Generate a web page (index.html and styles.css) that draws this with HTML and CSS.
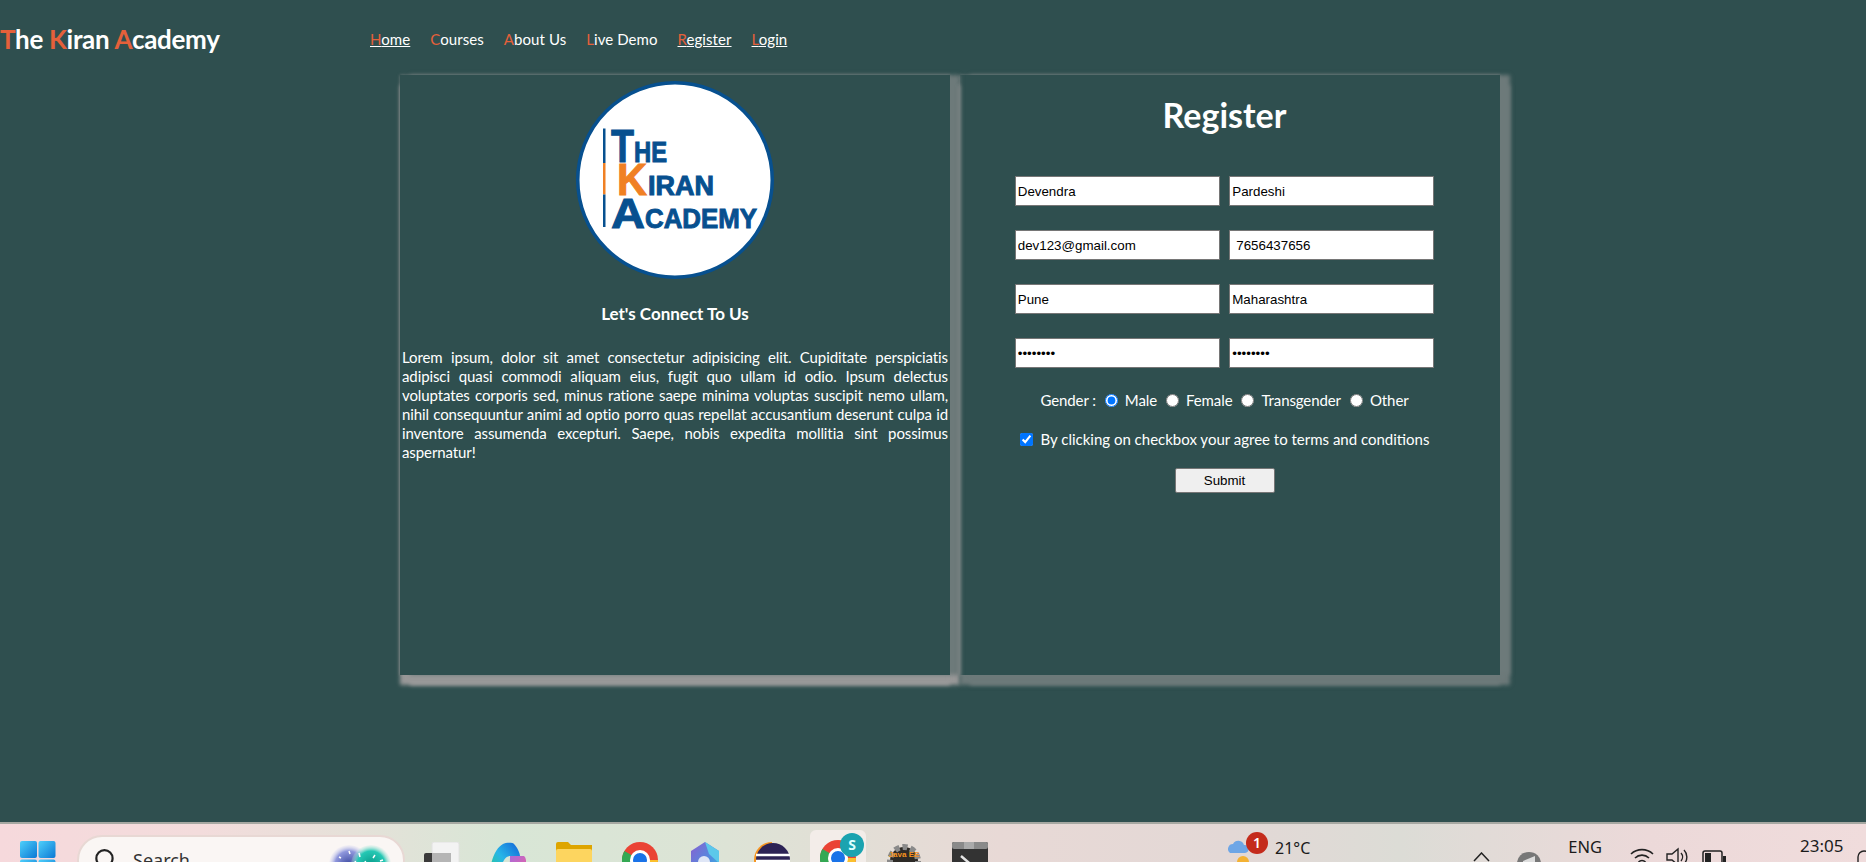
FILE: index.html
```html
<!DOCTYPE html>
<html lang="en">
<head>
<meta charset="utf-8">
<title>The Kiran Academy - Register</title>
<link rel="stylesheet" href="styles.css">
</head>
<body>
<header class="topbar">
  <div class="brand"><b>T</b>he <b>K</b>iran <b>A</b>cademy</div>
  <nav class="nav">
    <a class="link on" href="#"><b>H</b>ome</a>
    <a class="link" href="#"><b>C</b>ourses</a>
    <a class="link" href="#"><b>A</b>bout Us</a>
    <a class="link" href="#"><b>L</b>ive Demo</a>
    <a class="link on" href="#"><b>R</b>egister</a>
    <a class="link on" href="#"><b>L</b>ogin</a>
  </nav>
</header>
<main class="page">
  <section class="panel panel-left">
    <svg class="logo" viewBox="0 0 198 198" width="198" height="198" role="img" aria-label="The Kiran Academy logo">
      <circle cx="99" cy="99" r="97.25" fill="#fff" stroke="#07508f" stroke-width="3.500"/>
      <rect x="27" y="47.500" width="2.500" height="34.500" fill="#07508f"/>
      <rect x="27" y="82" width="2.500" height="31.500" fill="#f08024"/>
      <rect x="27" y="113.500" width="2.500" height="32.500" fill="#07508f"/>
      <text class="logo-text">
        <tspan x="35" y="80.500" font-size="46" textLength="23" lengthAdjust="spacingAndGlyphs">T</tspan>
        <tspan x="58" y="80.500" font-size="29" textLength="33" lengthAdjust="spacingAndGlyphs">HE</tspan>
        <tspan class="logo-k" x="41" y="113.500" font-size="44" textLength="30" lengthAdjust="spacingAndGlyphs">K</tspan>
        <tspan x="72" y="113.500" font-size="27" textLength="66" lengthAdjust="spacingAndGlyphs">IRAN</tspan>
        <tspan x="35" y="147" font-size="43" textLength="34" lengthAdjust="spacingAndGlyphs">A</tspan>
        <tspan x="69" y="147" font-size="28" textLength="112" lengthAdjust="spacingAndGlyphs">CADEMY</tspan>
      </text>
    </svg>
    <h4 class="connect">Let's Connect To Us</h4>
    <p class="lorem">Lorem ipsum, dolor sit amet consectetur adipisicing elit. Cupiditate perspiciatis adipisci quasi commodi aliquam eius, fugit quo ullam id odio. Ipsum delectus voluptates corporis sed, minus ratione saepe minima voluptas suscipit nemo ullam, nihil consequuntur animi ad optio porro quas repellat accusantium deserunt culpa id inventore assumenda excepturi. Saepe, nobis expedita mollitia sint possimus aspernatur!</p>
  </section>
  <section class="panel panel-right">
    <h2 class="title">Register</h2>
    <form class="form">
      <div class="fields">
        <input class="field" type="text" value="Devendra">
        <input class="field" type="text" value="Pardeshi">
        <input class="field" type="email" value="dev123@gmail.com">
        <input class="field field-phone" type="text" value="7656437656">
        <input class="field" type="text" value="Pune">
        <input class="field" type="text" value="Maharashtra">
        <input class="field" type="password" value="password">
        <input class="field" type="password" value="password">
      </div>
      <div class="gender">
        <span class="gender-label">Gender :</span>
        <label class="opt"><input type="radio" name="g" checked>Male</label>
        <label class="opt"><input type="radio" name="g">Female</label>
        <label class="opt"><input type="radio" name="g">Transgender</label>
        <label class="opt"><input type="radio" name="g">Other</label>
      </div>
      <label class="agree"><input type="checkbox" checked>By clicking on checkbox your agree to terms and conditions</label>
      <button class="submit" type="button">Submit</button>
    </form>
  </section>
</main>
<footer class="taskbar">
  <svg class="start" viewBox="0 0 36 36" width="36" height="36" aria-hidden="true">
    <defs>
      <linearGradient id="win" x1="0" y1="0" x2="1" y2="1"><stop offset="0" stop-color="#4fd0fb"/><stop offset="1" stop-color="#0a78d4"/></linearGradient>
    </defs>
    <rect x="0" y="0" width="17" height="17" rx="2" fill="url(#win)"/>
    <rect x="18.500" y="0" width="17" height="17" rx="2" fill="url(#win)"/>
    <rect x="0" y="18.500" width="17" height="17" rx="2" fill="url(#win)"/>
    <rect x="18.500" y="18.500" width="17" height="17" rx="2" fill="url(#win)"/>
  </svg>
  <div class="search">
    <svg class="search-icon" viewBox="0 0 20 24" width="22" height="26" aria-hidden="true"><circle cx="9.500" cy="9.500" r="7.500" fill="none" stroke="#222" stroke-width="2"/><path d="M15 15l5 6" stroke="#222" stroke-width="2"/></svg>
    <span class="search-text">Search</span>
    <svg class="search-art" viewBox="0 0 62 40" width="62" height="40" aria-hidden="true">
      <defs>
        <radialGradient id="gl1"><stop offset="0" stop-color="#39479f"/><stop offset=".7" stop-color="#8f97dc"/><stop offset="1" stop-color="#d8d9f2" stop-opacity=".2"/></radialGradient>
        <radialGradient id="gl2"><stop offset="0" stop-color="#0a9a8a"/><stop offset=".7" stop-color="#25c8b4"/><stop offset="1" stop-color="#bfe9df" stop-opacity=".2"/></radialGradient>
      </defs>
      <circle cx="20" cy="20" r="20" fill="url(#gl1)"/>
      <circle cx="42" cy="20" r="20" fill="url(#gl2)"/>
      <ellipse cx="32" cy="30" rx="16" ry="12" fill="#8a8a4a" opacity=".7"/>
      <path d="M10 12l2 1M20 6l1 3M30 8l1 4M36 16l1 2M46 10l-2 3M54 15l-3 1M32 20l1 3M26 16l1 2M24 24l2 1M40 22l1 2" stroke="#fff" stroke-width="1.500"/>
    </svg>
  </div>
  <div class="apps">
    <svg class="app" viewBox="0 0 36 36" width="36" height="36" aria-hidden="true"><rect x="8" y="0" width="27" height="28" rx="2" fill="#f3f3f3" stroke="#e2e2e2"/><rect x="0" y="11" width="27" height="25" rx="2" fill="#3a3a3a"/><rect x="8" y="11" width="19" height="17" fill="#b5b5b5"/></svg>
    <svg class="app" viewBox="0 0 36 36" width="36" height="36" aria-hidden="true">
      <defs>
        <linearGradient id="cp1" x1="0" y1="1" x2="1" y2="0"><stop offset="0" stop-color="#2bd07a"/><stop offset=".5" stop-color="#27b5e8"/><stop offset="1" stop-color="#1463d8"/></linearGradient>
        <linearGradient id="cp2" x1="0" y1="0" x2="1" y2="1"><stop offset="0" stop-color="#a56ce0"/><stop offset="1" stop-color="#f0609a"/></linearGradient>
      </defs>
      <path d="M0 36C-1 22 5 6 13 2c2-1 9-2 11 0 3 3 6 9 6 12H20c-6 0-10 10-10 22z" fill="url(#cp1)"/>
      <path d="M20 14h14c3 2 3 12 0 20-2 2-14 2-18 2 4-6 4-18 4-22z" fill="url(#cp2)"/>
    </svg>
    <svg class="app" viewBox="0 0 36 36" width="36" height="36" aria-hidden="true"><path d="M0 2q0-2 2-2h10l3 3h21v6H0z" fill="#dea500"/><rect x="0" y="7" width="36" height="29" rx="2" fill="#fdd55f"/></svg>
    <svg class="app" viewBox="0 0 36 36" width="36" height="36" aria-hidden="true"><circle cx="18" cy="18" r="18" fill="#ea4335"/><path d="M18 18L2.400 27A18 18 0 0 1 2.400 9z" fill="#34a853"/><path d="M18 18h18a18 18 0 0 1-26 16z" fill="#fbc02d"/><circle cx="18" cy="18" r="8.500" fill="#1a73e8" stroke="#fff" stroke-width="3"/></svg>
    <svg class="app" viewBox="0 0 36 36" width="36" height="36" aria-hidden="true">
      <defs><linearGradient id="m365" x1="0" y1="0" x2="1" y2="1"><stop offset="0" stop-color="#8a5fd0"/><stop offset=".6" stop-color="#4f8fe0"/><stop offset="1" stop-color="#39c5d8"/></linearGradient></defs>
      <path d="M17 0l14 9v18l-14 9L3 27V9z" fill="url(#m365)"/><path d="M17 0l14 9v12L21 12z" fill="#5cc8ea"/><circle cx="16" cy="20" r="6" fill="#dfe6f6"/>
    </svg>
    <svg class="app" viewBox="0 0 36 36" width="36" height="36" aria-hidden="true"><path d="M18 0A18 18 0 0 0 18 36z" fill="#f7941e"/><circle cx="19" cy="18" r="17" fill="#2c2255"/><path d="M2 13h34M2 19h34M3 25h32" stroke="#fff" stroke-width="2.500"/></svg>
    <div class="app-active">
      <svg class="app" viewBox="0 0 36 36" width="36" height="36" aria-hidden="true"><circle cx="18" cy="18" r="18" fill="#ea4335"/><path d="M18 18L2.400 27A18 18 0 0 1 2.400 9z" fill="#34a853"/><path d="M18 18h18a18 18 0 0 1-26 16z" fill="#fbc02d"/><circle cx="18" cy="18" r="8.500" fill="#1a73e8" stroke="#fff" stroke-width="3"/></svg>
      <span class="profile">S</span>
    </div>
    <svg class="app" viewBox="0 0 36 36" width="36" height="36" aria-hidden="true"><circle cx="18" cy="19" r="14" fill="#2d2a26" stroke="#8a8a8a" stroke-width="6" stroke-dasharray="5 3"/><text class="java" x="18" y="15" text-anchor="middle">Java EE</text><text class="java" x="18" y="25" text-anchor="middle">IDE</text></svg>
    <svg class="app" viewBox="0 0 36 36" width="36" height="36" aria-hidden="true"><rect x="0" y="0" width="36" height="36" rx="2" fill="#333"/><rect x="0" y="0" width="36" height="7" rx="2" fill="#8a8a8a"/><rect x="12" y="0" width="10" height="7" fill="#aaa"/><path d="M9 14l7 6-7 6" fill="none" stroke="#e5e5e5" stroke-width="2.500"/></svg>
  </div>
  <div class="weather">
    <svg class="weather-icon" viewBox="0 0 30 30" width="30" height="30" aria-hidden="true"><path d="M2 15a5 5 0 0 1 3-9 6 6 0 0 1 11 1 4 4 0 0 1 1 8z" fill="#6ea6e6"/><circle cx="15" cy="24" r="6" fill="#f4b233"/></svg>
    <span class="alert">1</span>
    <span class="temp">21°C</span>
  </div>
  <div class="tray">
    <svg class="chevron" viewBox="0 0 17 10" width="17" height="10" aria-hidden="true"><path d="M1 9l7.500-8L16 9" fill="none" stroke="#222" stroke-width="1.500"/></svg>
    <svg class="shield" viewBox="0 0 24 24" width="24" height="24" aria-hidden="true"><path d="M0 14a12 11 0 0 1 24 0v8H0z" fill="#777"/><path d="M6 12l12-5v9H6z" fill="#ddd"/></svg>
    <span class="lang">ENG</span>
    <div class="status">
      <svg viewBox="0 0 24 20" width="24" height="20" aria-hidden="true"><path d="M1 7a16 16 0 0 1 22 0M5 11a10 10 0 0 1 14 0M8.500 15a5 5 0 0 1 7 0" fill="none" stroke="#222" stroke-width="1.600"/></svg>
      <svg viewBox="0 0 24 20" width="24" height="20" aria-hidden="true"><path d="M1 7h5l6-5v16l-6-5H1z" fill="none" stroke="#222" stroke-width="1.400"/><path d="M15 6a6 6 0 0 1 0 8M18 3a10 10 0 0 1 0 14" fill="none" stroke="#222" stroke-width="1.400"/></svg>
      <svg class="battery" viewBox="0 0 24 20" width="24" height="20" aria-hidden="true"><rect x="1" y="1" width="19" height="16" rx="2" fill="none" stroke="#222" stroke-width="1.500"/><rect x="3" y="3" width="6" height="12" fill="#222"/><rect x="21" y="6" width="3" height="6" fill="#222"/></svg>
    </div>
    <span class="clock">23:05</span>
    <svg class="bell" viewBox="0 0 14 20" width="14" height="20" aria-hidden="true"><path d="M1 16V8a6 6 0 0 1 12 0v8" fill="none" stroke="#222" stroke-width="1.400"/></svg>
  </div>
</footer>
</body>
</html>
```

FILE: styles.css
```css
* { box-sizing: border-box; }
html, body { height: 100%; }
body {
  margin: 0;
  height: 862px;
  overflow: hidden;
  display: flex;
  flex-direction: column;
  background: #2f4f4f;
  color: #fff;
  font-family: "Lato", "Liberation Sans", sans-serif;
}
.topbar {
  display: flex;
  align-items: center;
  height: 72px;
  margin-top: 3px;
  flex: none;
}
.brand {
  width: 370px;
  font-size: 26px;
  font-weight: 700;
  letter-spacing: -0.3px;
  white-space: nowrap;
}
.brand b { color: #e5603a; font-weight: 700; }
.nav { display: flex; gap: 20px; font-size: 15px; }
.link { color: #fff; text-decoration: none; letter-spacing: 0.07px; }
.link.on { text-decoration: underline; }
.link b { color: #e5603a; font-weight: 400; }
.page {
  flex: 1;
  display: flex;
  gap: 10px;
  margin-left: 400px;
}
.panel { height: 600px; }
.panel-left {
  width: 550px;
  padding: 6px 2px 0;
  display: flex;
  flex-direction: column;
  align-items: center;
  box-shadow:
    10px 0 4px #6d7a7a,
    0 10px 4px #999,
    10px 10px 4px #999,
    0 0 3px rgba(153, 153, 153, .6);
}
.panel-right {
  width: 540px;
  padding-right: 11px;
  display: flex;
  flex-direction: column;
  align-items: center;
  box-shadow:
    10px 0 4px #6d7a7a,
    0 10px 4px #6d7a7a,
    10px 10px 4px #6d7a7a,
    0 0 3px rgba(153, 153, 153, .6);
}
.logo { display: block; flex: none; }
.logo-text { font-family: "Liberation Sans", sans-serif; font-weight: 700; fill: #07508f; stroke: #07508f; stroke-width: 1px; }
.logo-text .logo-k { fill: #f08024; stroke: #f08024; }
.connect { margin: 25px 0 0; font-size: 17px; line-height: 20px; font-weight: 700; }
.lorem {
  margin: 24px 0 0;
  font-size: 15px;
  line-height: 19.100px;
  letter-spacing: -0.1px;
  text-align: justify;
  width: 100%;
}
.title { margin: 20px 0 0; font-size: 34px; line-height: 40px; font-weight: 700; }
.form { display: flex; flex-direction: column; align-items: center; margin-top: 41px; }
.fields { display: grid; grid-template-columns: 205.500px 205px; column-gap: 9px; row-gap: 24px; }
.field {
  width: 100%;
  height: 30px;
  padding: 0 2px;
  border: 1px solid #767676;
  background: #fff;
  color: #000;
  font: 13.33px "Liberation Sans", Arial, sans-serif;
}
.field-phone { padding-left: 6px; }
.gender { display: flex; align-items: center; margin-top: 22px; font-size: 15px; height: 20px; letter-spacing: -0.1px; }
.gender-label { margin-right: 9px; }
.opt { display: flex; align-items: center; margin-right: 9px; }
.opt:last-child { margin-right: 0; }
.opt input { margin: 0 7px 0 0; }
.agree { display: flex; align-items: center; margin-top: 19px; height: 20px; font-size: 15px; letter-spacing: 0; }
.agree input { margin: 0 8px 0 0; }
.submit {
  margin-top: 19px;
  width: 100px;
  height: 25px;
  padding: 0;
  border: 1px solid #767676;
  border-radius: 2px;
  background: #efefef;
  color: #000;
  font: 13.33px "Liberation Sans", Arial, sans-serif;
}
.taskbar {
  flex: none;
  height: 40px;
  overflow: hidden;
  display: flex;
  align-items: flex-start;
  border-top: 2px solid #a6a8a2;
  padding-left: 20px;
  background: linear-gradient(90deg, #f6d9dc 0, #f3dcdc 200px, #d8e6d6 500px, #dce4d6 700px, #e8d9d6 1000px, #e3d8d6 1230px, #dcdcd6 1400px, #ecd9d9 1650px, #f0dcdc 1866px);
  color: #1b1b1b;
  font-family: "Noto Sans", "Open Sans", sans-serif;
}
.start { flex: none; margin-top: 17px; }
.search {
  flex: none;
  width: 328px;
  height: 50px;
  margin: 11px 0 0 21px;
  padding: 11px 12px 0 15px;
  display: flex;
  align-items: flex-start;
  background: #faf6f4;
  border: 2px solid #e8d8d4;
  border-radius: 26px;
}
.search-text { margin-left: 17px; font-size: 18px; line-height: 24px; color: #333; }
.search-art { margin: -3px 0 0 auto; }
.apps { flex: none; display: flex; align-items: flex-start; gap: 30px; margin: 18px 0 0 19px; }
.app { display: block; flex: none; }
.app-active {
  position: relative;
  flex: none;
  width: 56px;
  height: 60px;
  margin: -12px -10px 0;
  padding: 10px 10px 0;
  border-radius: 6px;
  background: #f3ede9;
}
.profile {
  position: absolute;
  left: 30px;
  top: 3px;
  width: 24px;
  height: 24px;
  border-radius: 50%;
  background: #1ba3b0;
  color: #dff;
  font-size: 14px;
  line-height: 24px;
  text-align: center;
  font-weight: 700;
}
.java { font-size: 8px; font-weight: 700; fill: #f7931e; font-family: "Liberation Sans", sans-serif; }
.weather { position: relative; flex: none; display: flex; margin: 14px 0 0 240px; }
.alert {
  position: absolute;
  left: 18px;
  top: -6px;
  width: 22px;
  height: 22px;
  border-radius: 50%;
  background: #c42b1c;
  color: #fff;
  font-size: 14px;
  line-height: 22px;
  text-align: center;
  font-weight: 600;
}
.temp { margin: -2px 0 0 17px; font-size: 16px; line-height: 24px; }
.tray { flex: none; display: flex; align-items: flex-start; margin-left: 163px; }
.chevron { margin-top: 28px; }
.shield { margin: 25px 0 0 27px; }
.lang { margin: 13px 0 0 27px; font-size: 16.500px; line-height: 20px; }
.status { display: flex; gap: 12px; margin: 23px 0 0 28px; }
.battery { margin-top: 3px; }
.clock { margin: 12px 0 0 74px; font-size: 17px; line-height: 20px; }
.bell { margin: 25px 0 0 14px; }
```
